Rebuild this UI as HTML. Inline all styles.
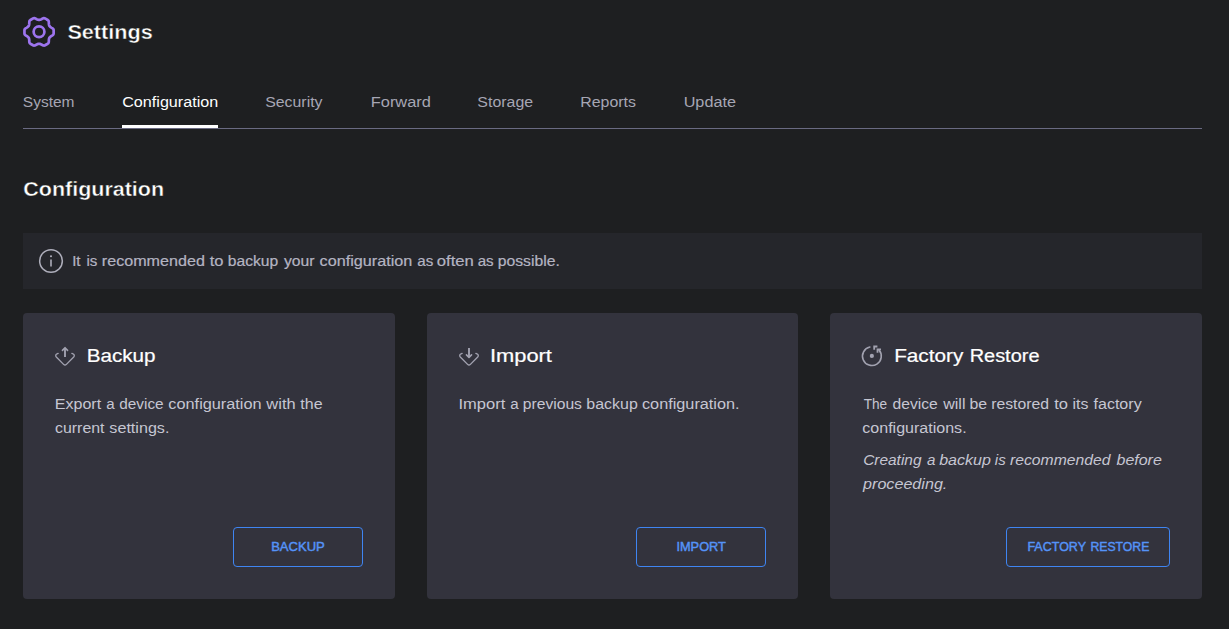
<!DOCTYPE html>
<html lang="en">
<head>
<meta charset="utf-8">
<title>Settings</title>
<style>
  html, body { margin: 0; padding: 0; }
  body {
    width: 1229px; height: 629px; overflow: hidden;
    background: #1e1f21;
    font-family: "Liberation Sans", sans-serif;
    color: #e8e8ec;
    position: relative;
  }
  .t { position: absolute; left: 0; top: 0; white-space: nowrap; line-height: 1; transform-origin: 0 0; }
  .h { font-size: 20px; color: #fff; font-weight: 700; -webkit-text-stroke: 0.4px #1e1f21; }
  .tab { font-size: 14px; color: #a6a6b4; }
  .tab.act { color: #fff; }
  .ban { font-size: 14px; color: #b4b4c2; -webkit-text-stroke: 0.2px #b4b4c2; }
  .ct { font-size: 18px; color: #fff; -webkit-text-stroke: 0.2px #fff; }
  .cb { font-size: 14px; color: #c6c6d2; }
  .it { font-style: italic; }
  .bt { font-size: 13px; color: #5593f8; -webkit-text-stroke: 0.45px #5593f8; }
  #tabline { position: absolute; left: 23px; top: 128px; width: 1179px; height: 1px; background: #6a6a82; }
  #tabactive { position: absolute; left: 122px; top: 125px; width: 96px; height: 3px; background: #fff; }
  #banner { position: absolute; left: 23px; top: 233px; width: 1179px; height: 56px; background: #25262b; }
  .card { position: absolute; top: 313px; height: 286px; width: 371.67px; background: #33333d; border-radius: 4px; }
  .btn { position: absolute; top: 527px; height: 38px; border: 1px solid #3f85f2; border-radius: 4px; }
  #icons { position: absolute; left: 0; top: 0; width: 1229px; height: 629px; pointer-events: none; }
</style>
</head>
<body>

<div id="tabline"></div>
<div id="tabactive"></div>
<div id="banner"></div>
<div class="card" style="left:23px"></div>
<div class="card" style="left:426.67px"></div>
<div class="card" style="left:830.33px"></div>
<div class="btn" style="left:233px;width:128px"></div>
<div class="btn" style="left:636px;width:128px"></div>
<div class="btn" style="left:1006px;width:162px"></div>

<svg id="icons" viewBox="0 0 1229 629" fill="none" stroke-linecap="round" stroke-linejoin="round">
  <!-- gear -->
  <g stroke="#9d74ee" stroke-width="2.7">
    <circle cx="39.03" cy="31.8" r="5.4"/>
    <path d="M53.65 31.85 L53.65 32.36 L53.65 32.87 L53.65 33.39 L53.61 33.90 L53.43 34.38 L53.12 34.82 L52.69 35.22 L52.14 35.58 L51.60 35.90 L51.10 36.22 L50.66 36.52 L50.26 36.83 L49.92 37.14 L49.63 37.47 L49.39 37.82 L49.21 38.20 L49.07 38.62 L48.97 39.07 L48.90 39.57 L48.86 40.11 L48.83 40.69 L48.82 41.32 L48.79 41.97 L48.66 42.55 L48.43 43.04 L48.11 43.44 L47.68 43.73 L47.24 43.98 L46.79 44.24 L46.35 44.49 L45.91 44.75 L45.46 45.01 L45.02 45.26 L44.56 45.49 L44.05 45.57 L43.51 45.52 L42.95 45.35 L42.37 45.05 L41.81 44.74 L41.30 44.47 L40.81 44.24 L40.34 44.05 L39.90 43.91 L39.47 43.82 L39.05 43.80 L38.63 43.82 L38.20 43.91 L37.76 44.05 L37.29 44.24 L36.80 44.47 L36.29 44.74 L35.73 45.05 L35.15 45.35 L34.59 45.52 L34.05 45.57 L33.54 45.49 L33.08 45.26 L32.64 45.01 L32.19 44.75 L31.75 44.49 L31.31 44.24 L30.86 43.98 L30.42 43.73 L29.99 43.44 L29.67 43.04 L29.44 42.55 L29.31 41.97 L29.28 41.32 L29.27 40.69 L29.24 40.11 L29.20 39.57 L29.13 39.07 L29.03 38.62 L28.89 38.20 L28.71 37.82 L28.47 37.47 L28.18 37.14 L27.84 36.83 L27.44 36.52 L27.00 36.22 L26.50 35.90 L25.96 35.58 L25.41 35.22 L24.98 34.82 L24.67 34.38 L24.49 33.90 L24.45 33.39 L24.45 32.87 L24.45 32.36 L24.45 31.85 L24.45 31.34 L24.45 30.83 L24.45 30.31 L24.49 29.80 L24.67 29.32 L24.98 28.88 L25.41 28.48 L25.96 28.12 L26.50 27.80 L27.00 27.48 L27.44 27.18 L27.84 26.87 L28.18 26.56 L28.47 26.23 L28.71 25.88 L28.89 25.50 L29.03 25.08 L29.13 24.63 L29.20 24.13 L29.24 23.59 L29.27 23.01 L29.28 22.38 L29.31 21.73 L29.44 21.15 L29.67 20.66 L29.99 20.26 L30.42 19.97 L30.86 19.72 L31.31 19.46 L31.75 19.21 L32.19 18.95 L32.64 18.69 L33.08 18.44 L33.54 18.21 L34.05 18.13 L34.59 18.18 L35.15 18.35 L35.73 18.65 L36.29 18.96 L36.80 19.23 L37.29 19.46 L37.76 19.65 L38.20 19.79 L38.63 19.88 L39.05 19.90 L39.47 19.88 L39.90 19.79 L40.34 19.65 L40.81 19.46 L41.30 19.23 L41.81 18.96 L42.37 18.65 L42.95 18.35 L43.51 18.18 L44.05 18.13 L44.56 18.21 L45.02 18.44 L45.46 18.69 L45.91 18.95 L46.35 19.21 L46.79 19.46 L47.24 19.72 L47.68 19.97 L48.11 20.26 L48.43 20.66 L48.66 21.15 L48.79 21.73 L48.82 22.38 L48.83 23.01 L48.86 23.59 L48.90 24.13 L48.97 24.63 L49.07 25.08 L49.21 25.50 L49.39 25.88 L49.63 26.23 L49.92 26.56 L50.26 26.87 L50.66 27.18 L51.10 27.48 L51.60 27.80 L52.14 28.12 L52.69 28.48 L53.12 28.88 L53.43 29.32 L53.61 29.80 L53.65 30.31 L53.65 30.83 L53.65 31.34 Z"/>
  </g>
  <!-- info -->
  <g stroke="#aeaebb" stroke-width="1.35">
    <circle cx="51" cy="261" r="11.35" stroke-width="1.5"/>
    <line x1="51" y1="259.6" x2="51" y2="266.6" stroke-width="1.6" stroke-linecap="butt"/>
    <circle cx="51" cy="256.2" r="1.05" fill="#aeaebb" stroke="none"/>
  </g>
  <!-- export (backup) -->
  <g stroke="#a2a2b0" stroke-width="1.35">
    <path d="M58.14 353.38 L57.02 353.79 A2.0 2.0 0 0 0 56.29 357.08 L63.59 364.38 A2.0 2.0 0 0 0 66.41 364.38 L73.71 357.08 A2.0 2.0 0 0 0 72.98 353.79 L71.86 353.38"/>
    <path d="M65 347.9 V356.9" stroke-width="1.9" stroke-linecap="butt"/>
    <path d="M62.45 350.35 L65 347.7 L67.55 350.35" stroke-width="1.6"/>
  </g>
  <!-- import -->
  <g stroke="#a2a2b0" stroke-width="1.35">
    <path d="M462.14 353.38 L461.02 353.79 A2.0 2.0 0 0 0 460.29 357.08 L467.59 364.38 A2.0 2.0 0 0 0 470.41 364.38 L477.71 357.08 A2.0 2.0 0 0 0 476.98 353.79 L475.86 353.38"/>
    <path d="M469 347.9 V357.3" stroke-width="1.9" stroke-linecap="butt"/>
    <path d="M466.45 354.85 L469 357.5 L471.55 354.85" stroke-width="1.6"/>
  </g>
  <!-- restore -->
  <g stroke="#a2a2b0" stroke-width="1.6">
    <path id="restorearc" d="M869.85 346.95 A9.4 9.4 0 1 0 878.9 349.85"/>
    <path d="M881 349.4 H877.5 V352.7" stroke-width="1.8" stroke-linecap="butt" stroke-linejoin="miter"/>
    <path d="M877.4 346.5 H874.2 V349.8" stroke-width="1.8" stroke-linecap="butt" stroke-linejoin="miter"/>
    <circle cx="871.85" cy="355.95" r="2.1" fill="#a2a2b0" stroke="none"/>
  </g>
</svg>

<div class="t h" id="t_title" style="transform:translate(67.43px,21.57px) scaleX(1.0807)">Settings</div>
<div class="t tab" id="t_tab1" style="transform:translate(22.79px,94.95px) scaleX(1.1076)">System</div>
<div class="t tab act" id="t_tab2" style="transform:translate(122.21px,94.95px) scaleX(1.1526)">Configuration</div>
<div class="t tab" id="t_tab3" style="transform:translate(265.18px,94.95px) scaleX(1.1340)">Security</div>
<div class="t tab" id="t_tab4" style="transform:translate(370.77px,94.95px) scaleX(1.1695)">Forward</div>
<div class="t tab" id="t_tab5" style="transform:translate(477.37px,94.95px) scaleX(1.1358)">Storage</div>
<div class="t tab" id="t_tab6" style="transform:translate(580.28px,94.95px) scaleX(1.1362)">Reports</div>
<div class="t tab" id="t_tab7" style="transform:translate(683.66px,94.95px) scaleX(1.1586)">Update</div>
<div class="t h" id="t_h2" style="transform:translate(23.29px,178.67px) scaleX(1.0740)">Configuration</div>
<div class="t ban" id="t_ban_1" style="transform:translate(72.15px,253.65px) scaleX(1.0800)">It</div>
<div class="t ban" id="t_ban_2" style="transform:translate(86.48px,253.65px) scaleX(1.0800)">is</div>
<div class="t ban" id="t_ban_3" style="transform:translate(101.84px,253.65px) scaleX(1.1511)">recommended</div>
<div class="t ban" id="t_ban_4" style="transform:translate(209.67px,253.65px) scaleX(1.1800)">to</div>
<div class="t ban" id="t_ban_5" style="transform:translate(227.78px,253.65px) scaleX(1.1182)">backup</div>
<div class="t ban" id="t_ban_6" style="transform:translate(283.94px,253.65px) scaleX(1.1227)">your</div>
<div class="t ban" id="t_ban_7" style="transform:translate(319.56px,253.65px) scaleX(1.1571)">configuration</div>
<div class="t ban" id="t_ban_8" style="transform:translate(417.22px,253.65px) scaleX(1.0800)">as</div>
<div class="t ban" id="t_ban_9" style="transform:translate(436.79px,253.65px) scaleX(1.1908)">often</div>
<div class="t ban" id="t_ban_10" style="transform:translate(477.64px,253.65px) scaleX(1.0800)">as</div>
<div class="t ban" id="t_ban_11" style="transform:translate(497.69px,253.65px) scaleX(1.1233)">possible.</div>
<div class="t ct" id="t_c1" style="transform:translate(86.67px,346.56px) scaleX(1.1471)">Backup</div>
<div class="t ct" id="t_c2" style="transform:translate(489.92px,346.56px) scaleX(1.2159)">Import</div>
<div class="t ct" id="t_c3_1" style="transform:translate(894.16px,346.56px) scaleX(1.1519)">Factory</div>
<div class="t ct" id="t_c3_2" style="transform:translate(969.64px,346.56px) scaleX(1.1084)">Restore</div>
<div class="t cb" id="t_b11_1" style="transform:translate(54.72px,397.15px) scaleX(1.1474)">Export</div>
<div class="t cb" id="t_b11_2" style="transform:translate(106.14px,397.15px) scaleX(1.0800)">a</div>
<div class="t cb" id="t_b11_3" style="transform:translate(119.28px,397.15px) scaleX(1.0955)">device</div>
<div class="t cb" id="t_b11_4" style="transform:translate(168.35px,397.15px) scaleX(1.1631)">configuration</div>
<div class="t cb" id="t_b11_5" style="transform:translate(266.37px,397.15px) scaleX(1.1742)">with</div>
<div class="t cb" id="t_b11_6" style="transform:translate(300.32px,397.15px) scaleX(1.1419)">the</div>
<div class="t cb" id="t_b12_1" style="transform:translate(54.97px,421.15px) scaleX(1.1373)">current</div>
<div class="t cb" id="t_b12_2" style="transform:translate(109.36px,421.15px) scaleX(1.1513)">settings.</div>
<div class="t cb" id="t_b21_1" style="transform:translate(458.49px,397.15px) scaleX(1.1796)">Import</div>
<div class="t cb" id="t_b21_2" style="transform:translate(510.24px,397.15px) scaleX(1.0800)">a</div>
<div class="t cb" id="t_b21_3" style="transform:translate(522.79px,397.15px) scaleX(1.1177)">previous</div>
<div class="t cb" id="t_b21_4" style="transform:translate(586.30px,397.15px) scaleX(1.1400)">backup</div>
<div class="t cb" id="t_b21_5" style="transform:translate(642.00px,397.15px) scaleX(1.1602)">configuration.</div>
<div class="t cb" id="t_b31_1" style="transform:translate(863.63px,397.15px) scaleX(0.9738)">The</div>
<div class="t cb" id="t_b31_2" style="transform:translate(892.48px,397.15px) scaleX(1.1177)">device</div>
<div class="t cb" id="t_b31_3" style="transform:translate(943.19px,397.15px) scaleX(1.1452)">will</div>
<div class="t cb" id="t_b31_4" style="transform:translate(969.38px,397.15px) scaleX(1.1318)">be</div>
<div class="t cb" id="t_b31_5" style="transform:translate(991.13px,397.15px) scaleX(1.1274)">restored</div>
<div class="t cb" id="t_b31_6" style="transform:translate(1054.25px,397.15px) scaleX(1.1800)">to</div>
<div class="t cb" id="t_b31_7" style="transform:translate(1072.55px,397.15px) scaleX(1.1311)">its</div>
<div class="t cb" id="t_b31_8" style="transform:translate(1093.52px,397.15px) scaleX(1.1457)">factory</div>
<div class="t cb" id="t_b32" style="transform:translate(862.27px,421.15px) scaleX(1.1456)">configurations.</div>
<div class="t cb it" id="t_b33_1" style="transform:translate(863.13px,453.15px) scaleX(1.1026)">Creating</div>
<div class="t cb it" id="t_b33_2" style="transform:translate(927.12px,453.15px) scaleX(1.0800)">a</div>
<div class="t cb it" id="t_b33_3" style="transform:translate(939.17px,453.15px) scaleX(1.1459)">backup</div>
<div class="t cb it" id="t_b33_4" style="transform:translate(994.82px,453.15px) scaleX(1.0800)">is</div>
<div class="t cb it" id="t_b33_5" style="transform:translate(1010.04px,453.15px) scaleX(1.1212)">recommended</div>
<div class="t cb it" id="t_b33_6" style="transform:translate(1116.48px,453.15px) scaleX(1.1430)">before</div>
<div class="t cb it" id="t_b34" style="transform:translate(863.07px,477.15px) scaleX(1.1516)">proceeding.</div>
<div class="t bt" id="t_k1" style="transform:translate(271.13px,540.10px) scaleX(1.0036)">BACKUP</div>
<div class="t bt" id="t_k2" style="transform:translate(676.43px,540.10px) scaleX(0.9820)">IMPORT</div>
<div class="t bt" id="t_k3_1" style="transform:translate(1027.42px,540.10px) scaleX(0.9613)">FACTORY</div>
<div class="t bt" id="t_k3_2" style="transform:translate(1090.44px,540.10px) scaleX(0.9411)">RESTORE</div>

</body>
</html>
